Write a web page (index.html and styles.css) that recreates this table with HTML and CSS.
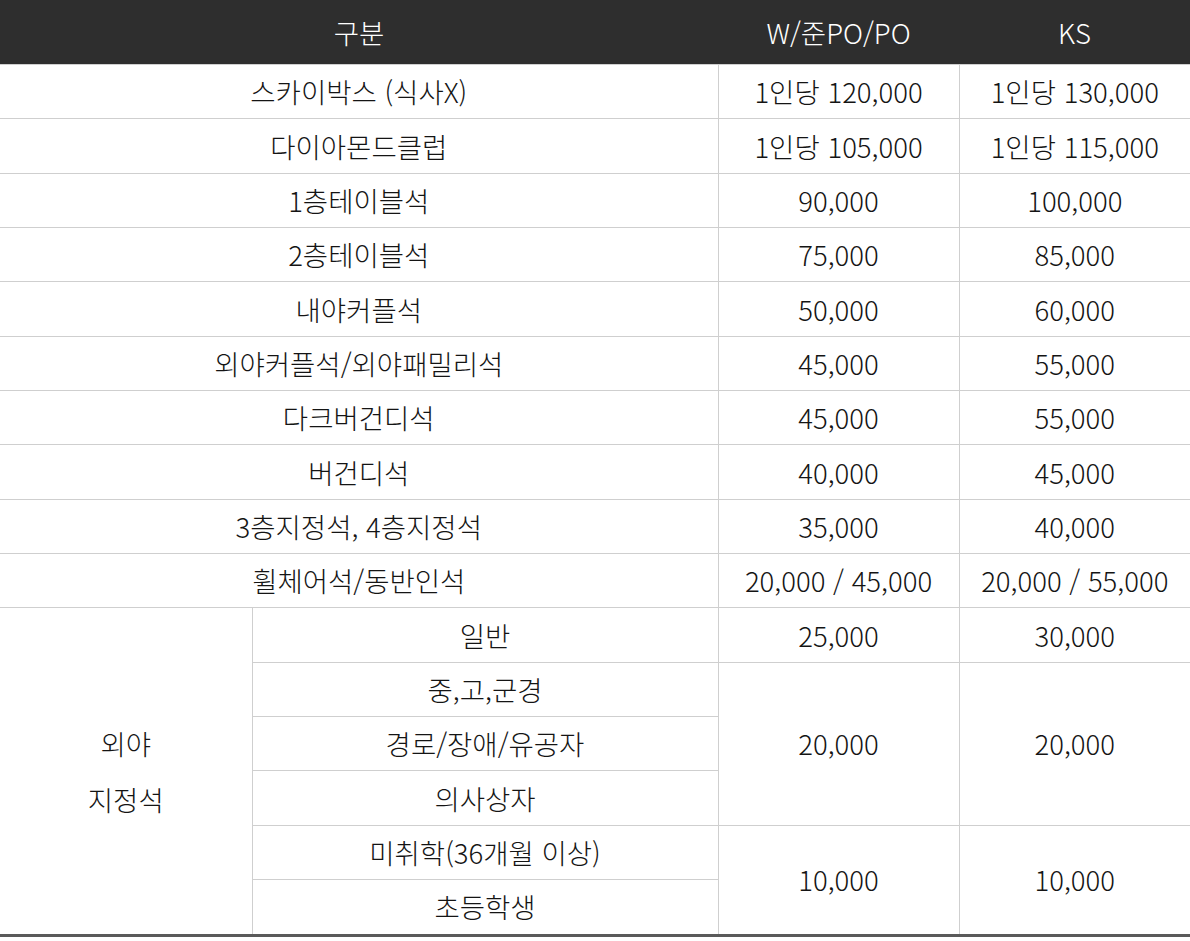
FILE: index.html
```html
<!DOCTYPE html>
<html lang="ko">
<head>
<meta charset="utf-8">
<title>좌석 요금표</title>
<link rel="stylesheet" href="styles.css">
</head>
<body>
<div class="wrap">
<table class="price">
  <colgroup>
    <col class="c-a">
    <col class="c-b">
    <col class="c-c">
    <col class="c-d">
  </colgroup>
  <thead>
    <tr><th colspan="2">구분</th><th>W/준PO/PO</th><th>KS</th></tr>
  </thead>
  <tbody>
    <tr><td colspan="2">스카이박스 (식사X)</td><td>1인당 120,000</td><td>1인당 130,000</td></tr>
    <tr><td colspan="2">다이아몬드클럽</td><td>1인당 105,000</td><td>1인당 115,000</td></tr>
    <tr><td colspan="2">1층테이블석</td><td>90,000</td><td>100,000</td></tr>
    <tr><td colspan="2">2층테이블석</td><td>75,000</td><td>85,000</td></tr>
    <tr><td colspan="2">내야커플석</td><td>50,000</td><td>60,000</td></tr>
    <tr><td colspan="2">외야커플석/외야패밀리석</td><td>45,000</td><td>55,000</td></tr>
    <tr><td colspan="2">다크버건디석</td><td>45,000</td><td>55,000</td></tr>
    <tr><td colspan="2">버건디석</td><td>40,000</td><td>45,000</td></tr>
    <tr><td colspan="2">3층지정석, 4층지정석</td><td>35,000</td><td>40,000</td></tr>
    <tr><td colspan="2">휠체어석/동반인석</td><td>20,000 / 45,000</td><td>20,000 / 55,000</td></tr>
    <tr><td rowspan="6" class="group">외야<br>지정석</td><td>일반</td><td>25,000</td><td>30,000</td></tr>
    <tr><td>중,고,군경</td><td rowspan="3">20,000</td><td rowspan="3">20,000</td></tr>
    <tr><td>경로/장애/유공자</td></tr>
    <tr><td>의사상자</td></tr>
    <tr><td>미취학(36개월 이상)</td><td rowspan="2">10,000</td><td rowspan="2">10,000</td></tr>
    <tr><td>초등학생</td></tr>
  </tbody>
</table>
</div>
</body>
</html>
```
FILE: styles.css
```css
html, body {
  margin: 0;
  padding: 0;
  background: #ffffff;
}

.wrap {
  width: 1190px;
  border-bottom: 3px solid #5a5a5a;
}

.price {
  width: 1190px;
  border-collapse: collapse;
  table-layout: fixed;
  font-family: "Noto Sans CJK KR", "Noto Sans", sans-serif;
  font-size: 27.5px;
  font-weight: 300;
  color: #141414;
  border-style: hidden;
}

.c-a { width: 252px; }
.c-b { width: 466px; }
.c-c { width: 241px; }
.c-d { width: 231px; }

.price th {
  height: 64px;
  padding: 0;
  background: #2e2e2e;
  color: #ffffff;
  font-weight: 300;
  text-align: center;
  border: none;
  border-bottom: 1px solid #cfcfcf;
}

.price td {
  height: 53.35px;
  padding: 0;
  text-align: center;
  vertical-align: middle;
  border: 1px solid #cfcfcf;
  line-height: 1.2;
}

.price td.group {
  line-height: 56px;
}
```
